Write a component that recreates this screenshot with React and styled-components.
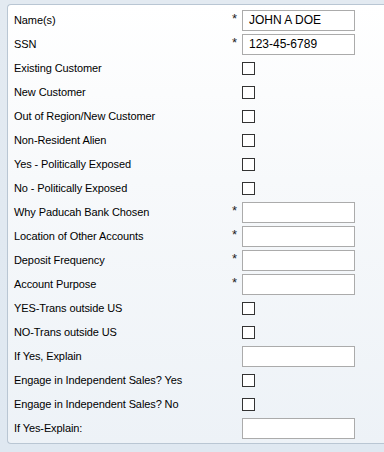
import React from "react";
import styled, { createGlobalStyle } from "styled-components";

const Global = createGlobalStyle`
  html, body { margin: 0; padding: 0; }
  body {
    width: 384px; height: 452px; overflow: hidden;
    background: #dfe7ef;
    font-family: "Liberation Sans", Arial, sans-serif;
  }
`;

const Outer = styled.div`
  width: 384px;
  height: 452px;
  padding: 4px 0 0 7px;
  box-sizing: border-box;
  background: linear-gradient(#e3eaf1, #dfe8f1);
`;

const Panel = styled.div`
  width: 377px;
  height: 440px;
  box-sizing: border-box;
  border: 1px solid #b9c6d3;
  border-right: none;
  border-radius: 4px 0 0 4px;
  background: linear-gradient(#ffffff 0%, #f7f9fb 40%, #edf2f7 100%);
  padding: 3px 0 0 6px;
`;

const Form = styled.div`
  display: grid;
  grid-template-columns: 218px 10px 113px;
  grid-auto-rows: 24px;
  align-items: center;
`;

const Label = styled.div`
  font-size: 11px;
  letter-spacing: -0.1px;
  color: #000;
  white-space: nowrap;
`;

const Req = styled.div`
  font-size: 13px;
  color: #222;
  align-self: start;
  padding-top: 4px;
  line-height: 13px;
`;

const TextBox = styled.div`
  height: 21px;
  box-sizing: border-box;
  border: 1px solid #ababab;
  background: #fff;
  font-size: 12px;
  color: #000;
  padding-left: 6px;
  display: flex;
  align-items: center;
`;

const Check = styled.div`
  width: 13px;
  height: 13px;
  box-sizing: border-box;
  border: 1px solid #333;
  background: #fff;
`;

const rows = [
  ["Name(s)", "text", true, "JOHN A DOE"],
  ["SSN", "text", true, "123-45-6789"],
  ["Existing Customer", "check"],
  ["New Customer", "check"],
  ["Out of Region/New Customer", "check"],
  ["Non-Resident Alien", "check"],
  ["Yes - Politically Exposed", "check"],
  ["No - Politically Exposed", "check"],
  ["Why Paducah Bank Chosen", "text", true, ""],
  ["Location of Other Accounts", "text", true, ""],
  ["Deposit Frequency", "text", true, ""],
  ["Account Purpose", "text", true, ""],
  ["YES-Trans outside US", "check"],
  ["NO-Trans outside US", "check"],
  ["If Yes, Explain", "text", false, ""],
  ["Engage in Independent Sales? Yes", "check"],
  ["Engage in Independent Sales? No", "check"],
  ["If Yes-Explain:", "text", false, ""],
];

export default function App() {
  return (
    <>
      <Global />
      <Outer>
        <Panel>
          <Form>
            {rows.map(([label, kind, req, value], i) => (
              <React.Fragment key={i}>
                <Label>{label}</Label>
                <Req>{req ? "*" : ""}</Req>
                {kind === "text" ? <TextBox>{value}</TextBox> : <Check />}
              </React.Fragment>
            ))}
          </Form>
        </Panel>
      </Outer>
    </>
  );
}
